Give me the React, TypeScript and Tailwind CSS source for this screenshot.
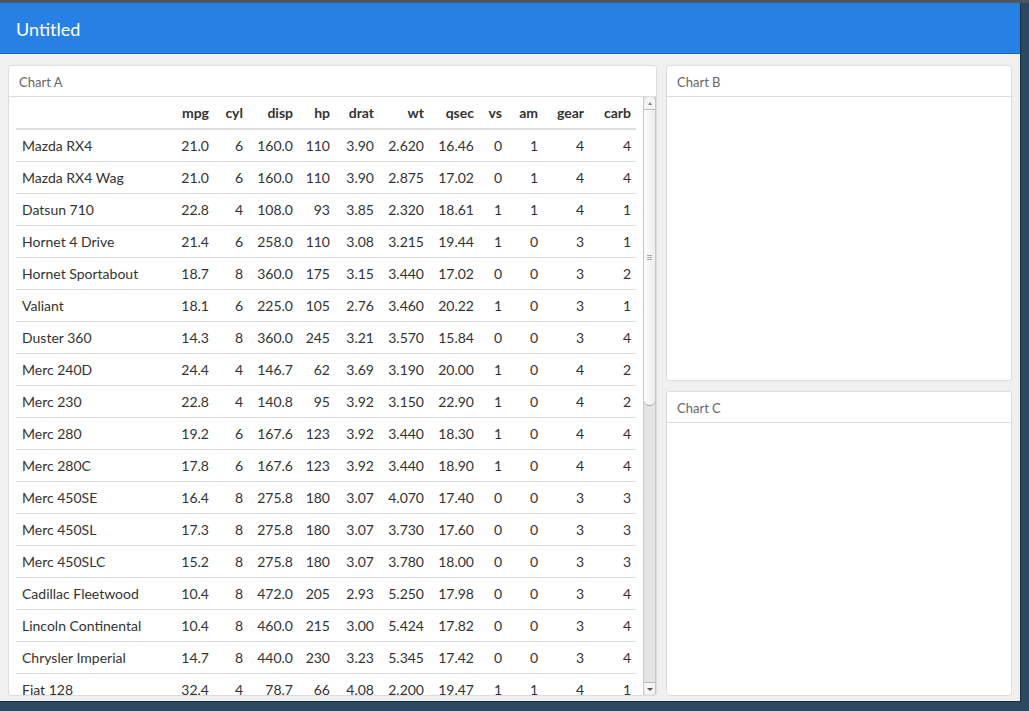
import React from "react"

const cols = ["mpg", "cyl", "disp", "hp", "drat", "wt", "qsec", "vs", "am", "gear", "carb"]
const widths = ["w-[44px]", "w-[34px]", "w-[50px]", "w-[37px]", "w-[44px]", "w-[50px]", "w-[50px]", "w-[28px]", "w-[36px]", "w-[46px]", "w-[47px]"]

const rows: [string, ...string[]][] = [
  ["Mazda RX4", "21.0", "6", "160.0", "110", "3.90", "2.620", "16.46", "0", "1", "4", "4"],
  ["Mazda RX4 Wag", "21.0", "6", "160.0", "110", "3.90", "2.875", "17.02", "0", "1", "4", "4"],
  ["Datsun 710", "22.8", "4", "108.0", "93", "3.85", "2.320", "18.61", "1", "1", "4", "1"],
  ["Hornet 4 Drive", "21.4", "6", "258.0", "110", "3.08", "3.215", "19.44", "1", "0", "3", "1"],
  ["Hornet Sportabout", "18.7", "8", "360.0", "175", "3.15", "3.440", "17.02", "0", "0", "3", "2"],
  ["Valiant", "18.1", "6", "225.0", "105", "2.76", "3.460", "20.22", "1", "0", "3", "1"],
  ["Duster 360", "14.3", "8", "360.0", "245", "3.21", "3.570", "15.84", "0", "0", "3", "4"],
  ["Merc 240D", "24.4", "4", "146.7", "62", "3.69", "3.190", "20.00", "1", "0", "4", "2"],
  ["Merc 230", "22.8", "4", "140.8", "95", "3.92", "3.150", "22.90", "1", "0", "4", "2"],
  ["Merc 280", "19.2", "6", "167.6", "123", "3.92", "3.440", "18.30", "1", "0", "4", "4"],
  ["Merc 280C", "17.8", "6", "167.6", "123", "3.92", "3.440", "18.90", "1", "0", "4", "4"],
  ["Merc 450SE", "16.4", "8", "275.8", "180", "3.07", "4.070", "17.40", "0", "0", "3", "3"],
  ["Merc 450SL", "17.3", "8", "275.8", "180", "3.07", "3.730", "17.60", "0", "0", "3", "3"],
  ["Merc 450SLC", "15.2", "8", "275.8", "180", "3.07", "3.780", "18.00", "0", "0", "3", "3"],
  ["Cadillac Fleetwood", "10.4", "8", "472.0", "205", "2.93", "5.250", "17.98", "0", "0", "3", "4"],
  ["Lincoln Continental", "10.4", "8", "460.0", "215", "3.00", "5.424", "17.82", "0", "0", "3", "4"],
  ["Chrysler Imperial", "14.7", "8", "440.0", "230", "3.23", "5.345", "17.42", "0", "0", "3", "4"],
  ["Fiat 128", "32.4", "4", "78.7", "66", "4.08", "2.200", "19.47", "1", "1", "4", "1"],
]

function CardHeader({ title }: { title: string }) {
  return (
    <div className="h-[31px] shrink-0 border-b border-[#dddddd] pl-[10px] pt-[3px] flex items-center text-[13px] text-[#666666]">
      {title}
    </div>
  )
}

function Scrollbar() {
  return (
    <div className="w-[13px] shrink-0 flex flex-col bg-[#e4e4e4] border-x border-[#c8c8c8]">
      {/* up button */}
      <div className="h-[13px] shrink-0 bg-[#f4f4f4] border-b border-[#bbbbbb] rounded-t-[6px] flex items-center justify-center">
        <div className="w-0 h-0 border-x-[2px] border-x-transparent border-b-[3px] border-b-[#888888]" />
      </div>
      {/* thumb */}
      <div className="h-[296px] shrink-0 bg-gradient-to-r from-[#fdfdfd] to-[#ececec] border-b border-[#aaaaaa] rounded-b-[6px] flex items-center justify-center">
        <div className="flex flex-col gap-[1px]">
          <div className="w-[5px] h-px bg-[#aaaaaa]" />
          <div className="w-[5px] h-px bg-[#aaaaaa]" />
          <div className="w-[5px] h-px bg-[#aaaaaa]" />
        </div>
      </div>
      <div className="flex-1" />
      {/* down button */}
      <div className="h-[13px] shrink-0 bg-[#f4f4f4] border-t border-[#bbbbbb] rounded-b-[6px] flex items-center justify-center">
        <div className="w-0 h-0 border-x-[3px] border-x-transparent border-t-[3px] border-t-[#555555]" />
      </div>
    </div>
  )
}

export default function App() {
  return (
    <div className="w-[1029px] h-[711px] bg-[#2d4960] flex flex-col overflow-hidden font-['Lato',sans-serif]">
      <div className="h-[3px] shrink-0 bg-[#4b5560]" />
      <div className="flex flex-1 min-h-0">
        <div className="w-[1021px] h-[699px] flex flex-col bg-[#f0f0f0] border-r border-b border-[#1c2e3d]">
          {/* Navbar */}
          <div className="h-[51px] shrink-0 bg-[#2780e3] border-b border-[#1967be] flex items-center pl-[16px] pt-[2px]">
            <span className="text-[18px] text-white">Untitled</span>
          </div>

          {/* Content */}
          <div className="flex-1 min-h-0 flex gap-[9px] pt-[11px] pl-[8px] pr-[8px]">
            {/* Chart A */}
            <div className="w-[649px] h-[631px] bg-white border border-[#dddddd] rounded-[3px] flex flex-col overflow-hidden">
              <CardHeader title="Chart A" />
              <div className="flex flex-1 min-h-0">
                <div className="flex-1 overflow-hidden pl-[7px] pr-[7px]">
                  <table className="table-fixed border-collapse w-[620px] text-[14px] text-[#333333]">
                    <colgroup>
                      <col className="w-[154px]" />
                      {widths.map((w, i) => (
                        <col key={i} className={w} />
                      ))}
                    </colgroup>
                    <thead>
                      <tr className="h-[32px] border-b-2 border-[#dddddd]">
                        <th />
                        {cols.map((c) => (
                          <th key={c} className="text-right font-bold pr-[5px]">
                            {c}
                          </th>
                        ))}
                      </tr>
                    </thead>
                    <tbody>
                      {rows.map((r) => (
                        <tr key={r[0]} className="h-[32px] border-b border-[#dddddd]">
                          <td className="pl-[6px] pt-[1px] whitespace-nowrap">{r[0]}</td>
                          {r.slice(1).map((v, i) => (
                            <td key={i} className="text-right pr-[5px] pt-[1px]">
                              {v}
                            </td>
                          ))}
                        </tr>
                      ))}
                    </tbody>
                  </table>
                </div>
                <Scrollbar />
              </div>
            </div>

            {/* Right column */}
            <div className="w-[346px] flex flex-col gap-[10px]">
              <div className="h-[316px] bg-white border border-[#dddddd] rounded-[3px] flex flex-col">
                <CardHeader title="Chart B" />
              </div>
              <div className="h-[305px] bg-white border border-[#dddddd] rounded-[3px] flex flex-col">
                <CardHeader title="Chart C" />
              </div>
            </div>
          </div>
        </div>
      </div>
    </div>
  )
}
